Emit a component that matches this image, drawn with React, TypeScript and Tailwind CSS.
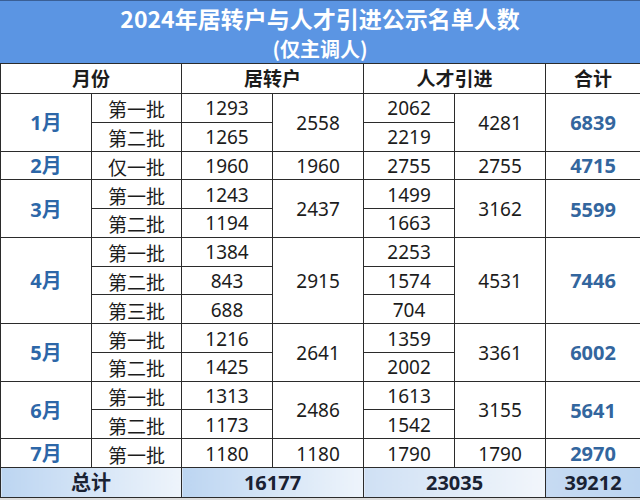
import React from "react";

type Row = { batch: string; a: string; b: string };
type Month = { m: string; rows: Row[]; ja: string; ta: string; total: string };

const data: Month[] = [
  { m: "1月", rows: [{ batch: "第一批", a: "1293", b: "2062" }, { batch: "第二批", a: "1265", b: "2219" }], ja: "2558", ta: "4281", total: "6839" },
  { m: "2月", rows: [{ batch: "仅一批", a: "1960", b: "2755" }], ja: "1960", ta: "2755", total: "4715" },
  { m: "3月", rows: [{ batch: "第一批", a: "1243", b: "1499" }, { batch: "第二批", a: "1194", b: "1663" }], ja: "2437", ta: "3162", total: "5599" },
  { m: "4月", rows: [{ batch: "第一批", a: "1384", b: "2253" }, { batch: "第二批", a: "843", b: "1574" }, { batch: "第三批", a: "688", b: "704" }], ja: "2915", ta: "4531", total: "7446" },
  { m: "5月", rows: [{ batch: "第一批", a: "1216", b: "1359" }, { batch: "第二批", a: "1425", b: "2002" }], ja: "2641", ta: "3361", total: "6002" },
  { m: "6月", rows: [{ batch: "第一批", a: "1313", b: "1613" }, { batch: "第二批", a: "1173", b: "1542" }], ja: "2486", ta: "3155", total: "5641" },
  { m: "7月", rows: [{ batch: "第一批", a: "1180", b: "1790" }], ja: "1180", ta: "1790", total: "2970" },
];

const cell = "border border-[#2b2b2b] p-0 pt-[2px] text-center align-middle leading-none";

export default function App() {
  return (
    <div
      className="w-[640px] h-[500px] bg-[#dcdcdc] overflow-hidden"
      style={{ fontFamily: '"Noto Sans", "Noto Sans CJK SC", sans-serif' }}
    >
      <div className="h-[63px] bg-[#5b95e3] border-t border-[#3a5f95] flex flex-col items-center text-white font-bold pt-[1px] overflow-hidden">
        <div className="text-[23px] leading-[33px]" style={{ fontFamily: '"Noto Sans CJK SC", sans-serif' }}>
          2024年居转户与人才引进公示名单人数
        </div>
        <div className="text-[20px] leading-[28px]" style={{ fontFamily: '"Noto Sans CJK SC", sans-serif' }}>
          (仅主调人)
        </div>
      </div>
      <table className="w-[640px] border-collapse table-fixed bg-white text-[19px] text-[#1c1c1c]">
        <colgroup>
          <col className="w-[91px]" />
          <col className="w-[90px]" />
          <col className="w-[91px]" />
          <col className="w-[91px]" />
          <col className="w-[91px]" />
          <col className="w-[91px]" />
          <col className="w-[95px]" />
        </colgroup>
        <tbody>
          <tr className="h-[30px] font-bold text-[19px]">
            <td colSpan={2} className={cell}>月份</td>
            <td colSpan={2} className={cell}>居转户</td>
            <td colSpan={2} className={cell}>人才引进</td>
            <td className={cell}>合计</td>
          </tr>
          {data.map((mo) =>
            mo.rows.map((r, i) => (
              <tr key={mo.m + i} className="h-[28.77px]">
                {i === 0 && (
                  <td rowSpan={mo.rows.length} className={`${cell} font-bold text-[#2d67a8] text-[20px]`}>
                    {mo.m}
                  </td>
                )}
                <td className={cell} style={{ fontFamily: '"Noto Sans CJK SC", sans-serif' }}>{r.batch}</td>
                <td className={cell}>{r.a}</td>
                {i === 0 && (
                  <td rowSpan={mo.rows.length} className={cell}>{mo.ja}</td>
                )}
                <td className={cell}>{r.b}</td>
                {i === 0 && (
                  <td rowSpan={mo.rows.length} className={cell}>{mo.ta}</td>
                )}
                {i === 0 && (
                  <td rowSpan={mo.rows.length} className={`${cell} font-bold text-[#33669e] text-[20px]`}>
                    {mo.total}
                  </td>
                )}
              </tr>
            ))
          )}
          <tr className="h-[30px] font-bold text-[20px] text-[#1a2233]">
            <td colSpan={2} className={`${cell} bg-gradient-to-r from-[#bcd5f1] to-[#eef4fb]`}>总计</td>
            <td colSpan={2} className={`${cell} bg-gradient-to-r from-[#bcd5f1] to-[#eef4fb]`}>16177</td>
            <td colSpan={2} className={`${cell} bg-gradient-to-r from-[#cfe0f4] to-[#f2f6fb]`}>23035</td>
            <td className={`${cell} bg-gradient-to-r from-[#c6daf2] to-[#bcd5f1]`}>39212</td>
          </tr>
        </tbody>
      </table>
    </div>
  );
}
